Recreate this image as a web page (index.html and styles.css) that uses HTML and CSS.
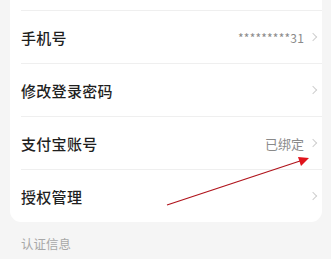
FILE: index.html
```html
<!DOCTYPE html>
<html lang="zh">
<head>
<meta charset="utf-8">
<link rel="stylesheet" href="styles.css">
</head>
<body>
<div class="page">
  <div class="card">
    <div class="top-cut"></div>
    <div class="row">
      <span class="label">手机号</span>
      <span class="value masked">*********31</span>
      <span class="chev"></span>
    </div>
    <div class="row">
      <span class="label">修改登录密码</span>
      <span class="value"></span>
      <span class="chev"></span>
    </div>
    <div class="row">
      <span class="label">支付宝账号</span>
      <span class="value">已绑定</span>
      <span class="chev"></span>
    </div>
    <div class="row last">
      <span class="label">授权管理</span>
      <span class="value"></span>
      <span class="chev"></span>
    </div>
  </div>
  <div class="section-title">认证信息</div>
</div>
<svg class="arrow" width="331" height="259" viewBox="0 0 331 259">
  <line x1="167" y1="205" x2="300" y2="161" stroke="#b0141c" stroke-width="1.3"/>
  <polygon points="309,158 298,157 301,166" fill="#e0141c"/>
</svg>
</body>
</html>
```
FILE: styles.css
```css
html, body {
  margin: 0;
  padding: 0;
  background: #f5f5f5;
  font-family: "Noto Sans CJK SC", "Noto Sans", sans-serif;
}
.page {
  width: 331px;
  height: 259px;
  overflow: hidden;
  padding: 0 9px 0 10px;
  box-sizing: border-box;
}
.card {
  background: #fff;
  border-radius: 0 0 11px 11px;
  padding-left: 11px;
}
.top-cut {
  height: 10px;
  border-bottom: 1px solid #efefef;
}
.row {
  height: 52px;
  display: flex;
  align-items: center;
  border-bottom: 1px solid #efefef;
  padding-right: 4px;
}
.row.last {
  border-bottom: none;
}
.label {
  flex: 1;
  font-size: 15px;
  font-weight: 500;
  color: #1f1f1f;
  letter-spacing: 0.3px;
}
.value {
  font-size: 13px;
  color: #8a8a8a;
  margin-right: 6px;
}
.masked {
  font-size: 12px;
  letter-spacing: 0.2px;
}
.chev {
  width: 5px;
  height: 5px;
  border-top: 1.2px solid #cfcfcf;
  border-right: 1.2px solid #cfcfcf;
  transform: rotate(45deg);
  margin-right: 2px;
}
.section-title {
  padding: 12px 0 0 11px;
  font-size: 12.5px;
  color: #a8a8a8;
}
.arrow {
  position: absolute;
  left: 0;
  top: 0;
}
```
